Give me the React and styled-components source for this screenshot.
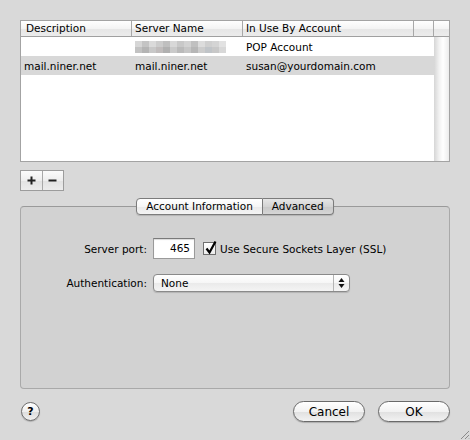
import React from 'react';
import styled, { createGlobalStyle } from 'styled-components';

const GlobalStyle = createGlobalStyle`
  html, body {
    margin: 0;
    padding: 0;
    background: #d9d9d9;
  }
  body {
    font-family: 'DejaVu Sans', 'Liberation Sans', sans-serif;
    font-size: 10.5px;
    color: #000;
  }
`;

// Whole sheet
const Sheet = styled.div`
  position: relative;
  width: 470px;
  height: 440px;
  box-sizing: border-box;
  padding: 20px 20px 0 20px;
  background: #d9d9d9;
  display: flex;
  flex-direction: column;
`;

// Server table
const Table = styled.div`
  width: 430px;
  height: 142px;
  box-sizing: border-box;
  border: 1px solid #a3a3a3;
  background: #fff;
  display: flex;
  flex-direction: column;
`;

const HeaderRow = styled.div`
  display: grid;
  grid-template-columns: 110px 111px 171px 20px 16px;
  height: 16px;
  box-sizing: border-box;
  border-bottom: 1px solid #a0a0a0;
  background: linear-gradient(#ffffff, #f4f4f4 50%, #e6e6e6 51%, #ececec);
`;

const HeaderCell = styled.div`
  box-sizing: border-box;
  padding-left: ${(p) => (p.$first ? '5px' : '3px')};
  border-left: ${(p) => (p.$first ? 'none' : '1px solid #a8a8a8')};
  line-height: 15px;
  white-space: nowrap;
  overflow: hidden;
`;

const BodyArea = styled.div`
  flex: 1;
  display: grid;
  grid-template-columns: 1fr 15px;
`;

const Rows = styled.div`
  display: flex;
  flex-direction: column;
`;

const Row = styled.div`
  display: grid;
  grid-template-columns: 111px 111px 1fr;
  height: 19px;
  align-items: center;
  background: ${(p) => (p.$selected ? '#d8d8d8' : '#fff')};
`;

const Cell = styled.div`
  padding-left: ${(p) => (p.$first ? '3px' : '3px')};
  white-space: nowrap;
`;

const ScrollTrack = styled.div`
  background: linear-gradient(to right, #d6d6d6, #f2f2f2 35%, #ffffff 60%, #ececec);
`;

// +/- buttons
const SegButtons = styled.div`
  display: flex;
  margin-top: 8px;
  width: 44px;
  height: 21px;
  box-sizing: border-box;
  border: 1px solid #9c9c9c;
  background: linear-gradient(#fbfbfb, #eeeeee 50%, #e2e2e2 51%, #ececec);
`;

const SegButton = styled.div`
  flex: 1;
  display: flex;
  align-items: center;
  justify-content: center;
  border-left: ${(p) => (p.$divider ? '1px solid #a8a8a8' : 'none')};
`;

// Tab view
const TabView = styled.div`
  margin-top: 7px;
  display: flex;
  flex-direction: column;
`;

const TabStrip = styled.div`
  display: flex;
  justify-content: center;
  margin-bottom: -9px;
  position: relative;
  z-index: 1;
`;

const Tab = styled.div`
  height: 17px;
  box-sizing: border-box;
  padding: 0 ${(p) => p.$pad}px;
  line-height: 15px;
  border: 1px solid #7c7c7c;
  border-left: ${(p) => (p.$first ? '1px solid #7c7c7c' : 'none')};
  border-radius: ${(p) => (p.$first ? '4px 0 0 4px' : '0 4px 4px 0')};
  background: ${(p) =>
    p.$active
      ? 'linear-gradient(#e6e6e6, #d4d4d4 50%, #c8c8c8 51%, #d6d6d6)'
      : 'linear-gradient(#ffffff, #f6f6f6 50%, #eaeaea 51%, #f4f4f4)'};
  box-shadow: 0 1px 1px rgba(0, 0, 0, 0.15);
  white-space: nowrap;
`;

const TabBox = styled.div`
  height: 183px;
  box-sizing: border-box;
  border: 1px solid #a9a9a9;
  border-top-color: #9a9a9a;
  border-radius: 4px;
  background: #d2d2d2;
  padding: 31px 0 0 40px;
  display: grid;
  grid-template-columns: 86px auto;
  column-gap: 6px;
  row-gap: 15px;
  align-content: start;
  align-items: center;
`;

const Label = styled.div`
  text-align: right;
  white-space: nowrap;
`;

const FieldLine = styled.div`
  display: flex;
  align-items: center;
  gap: 8px;
`;

const PortInput = styled.div`
  width: 42px;
  height: 21px;
  box-sizing: border-box;
  background: #fff;
  border: 1px solid #9a9a9a;
  border-top-color: #7a7a7a;
  box-shadow: inset 0 1px 1px rgba(0, 0, 0, 0.15);
  text-align: right;
  padding-right: 4px;
  line-height: 19px;
`;

const CheckLabel = styled.label`
  display: flex;
  align-items: center;
  gap: 4px;
  white-space: nowrap;
`;

const CheckBox = styled.span`
  width: 13px;
  height: 13px;
  box-sizing: border-box;
  border: 1px solid #6f6f6f;
  background: linear-gradient(#ffffff, #ececec);
  position: relative;
  display: inline-block;
`;

const CheckMark = styled.svg`
  position: absolute;
  left: 0px;
  top: -3px;
`;

const Popup = styled.div`
  width: 197px;
  height: 18px;
  box-sizing: border-box;
  border: 1px solid #8a8a8a;
  border-radius: 4px;
  background: linear-gradient(#ffffff, #f6f6f6 50%, #eaeaea 51%, #f4f4f4);
  box-shadow: 0 1px 1px rgba(0, 0, 0, 0.15);
  display: flex;
  align-items: center;
`;

const PopupText = styled.div`
  flex: 1;
  padding-left: 7px;
  line-height: 16px;
`;

const PopupArrows = styled.div`
  width: 15px;
  height: 100%;
  border-left: 1px solid #b4b4b4;
  display: flex;
  align-items: center;
  justify-content: center;
`;

// Bottom button bar
const BottomBar = styled.div`
  margin-top: 12px;
  display: flex;
  align-items: center;
  padding-left: 1px;
`;

const HelpButton = styled.div`
  width: 19px;
  height: 19px;
  box-sizing: border-box;
  border-radius: 50%;
  border: 1px solid #6e6e6e;
  background: linear-gradient(#ffffff, #eeeeee 50%, #dcdcdc 51%, #f0f0f0);
  box-shadow: 0 1px 1px rgba(0, 0, 0, 0.2);
  display: flex;
  align-items: center;
  justify-content: center;
  font-weight: bold;
  font-size: 11px;
`;

const Spacer = styled.div`
  flex: 1;
`;

const PushButton = styled.div`
  width: 72px;
  height: 21px;
  box-sizing: border-box;
  margin-left: ${(p) => p.$gap || 0}px;
  border: 1px solid #6a6a6a;
  border-radius: 11px;
  background: linear-gradient(#ffffff, #f2f2f2 50%, #e0e0e0 51%, #f2f2f2);
  box-shadow: 0 1px 1px rgba(0, 0, 0, 0.2);
  display: flex;
  align-items: center;
  justify-content: center;
  font-size: 12px;
`;

const Grip = styled.svg`
  position: absolute;
  right: 0;
  bottom: 0;
`;

const Blurred = () => (
  <svg width="92" height="12" style={{ display: 'block', marginTop: 1 }}>
    {[
      ['#d6d6d6', '#c4c4c4', '#dadada', '#cccccc', '#bfbfbf', '#d8d8d8', '#c8c8c8', '#d2d2d2', '#c0c0c0', '#dcdcdc', '#cfcfcf', '#d4d4d4', '#e2e2e2'],
      ['#c2c2c2', '#b4b4b4', '#c8c8c8', '#c0bcbc', '#b0b0b0', '#cacaca', '#bababa', '#c6c6c6', '#b6b6b6', '#cccccc', '#c0c4c8', '#c8c8c8', '#d8d8d8'],
    ].map((row, r) =>
      row.map((c, i) => <rect key={`${r}-${i}`} x={i * 7} y={r * 6} width="7" height="6" fill={c} />)
    )}
  </svg>
);

const rows = [
  { desc: '', server: <Blurred />, account: 'POP Account' },
  { desc: 'mail.niner.net', server: 'mail.niner.net', account: 'susan@yourdomain.com', selected: true },
];

export default function App() {
  return (
    <>
      <GlobalStyle />
      <Sheet>
        <Table>
          <HeaderRow>
            <HeaderCell $first>Description</HeaderCell>
            <HeaderCell>Server Name</HeaderCell>
            <HeaderCell>In Use By Account</HeaderCell>
            <HeaderCell />
            <HeaderCell />
          </HeaderRow>
          <BodyArea>
            <Rows>
              {rows.map((r, i) => (
                <Row key={i} $selected={r.selected}>
                  <Cell $first>{r.desc}</Cell>
                  <Cell>{r.server}</Cell>
                  <Cell>{r.account}</Cell>
                </Row>
              ))}
            </Rows>
            <ScrollTrack />
          </BodyArea>
        </Table>

        <SegButtons>
          <SegButton>
            <svg width="9" height="9" viewBox="0 0 9 9">
              <path d="M4.5 0.5v8M0.5 4.5h8" stroke="#222" strokeWidth="2" />
            </svg>
          </SegButton>
          <SegButton $divider>
            <svg width="9" height="9" viewBox="0 0 9 9">
              <path d="M0.5 4.5h8" stroke="#222" strokeWidth="2" />
            </svg>
          </SegButton>
        </SegButtons>

        <TabView>
          <TabStrip>
            <Tab $first $pad={9}>Account Information</Tab>
            <Tab $active $pad={9}>Advanced</Tab>
          </TabStrip>
          <TabBox>
            <Label>Server port:</Label>
            <FieldLine>
              <PortInput>465</PortInput>
              <CheckLabel>
                <CheckBox>
                  <CheckMark width="14" height="15" viewBox="0 0 14 15">
                    <path d="M2.5 8.5l3 4 6-11" fill="none" stroke="#000" strokeWidth="2.2" />
                  </CheckMark>
                </CheckBox>
                Use Secure Sockets Layer (SSL)
              </CheckLabel>
            </FieldLine>
            <Label>Authentication:</Label>
            <Popup>
              <PopupText>None</PopupText>
              <PopupArrows>
                <svg width="7" height="12" viewBox="0 0 7 12">
                  <path d="M3.5 1L6.5 5H0.5Z M3.5 11L6.5 7H0.5Z" fill="#111" />
                </svg>
              </PopupArrows>
            </Popup>
          </TabBox>
        </TabView>

        <BottomBar>
          <HelpButton>?</HelpButton>
          <Spacer />
          <PushButton>Cancel</PushButton>
          <PushButton $gap={13}>OK</PushButton>
        </BottomBar>

        <Grip width="12" height="12" viewBox="0 0 12 12">
          <path d="M11 3L3 11M11 7L7 11M11 10.5L10.5 11" stroke="#8a8a8a" strokeWidth="1" />
        </Grip>
      </Sheet>
    </>
  );
}
